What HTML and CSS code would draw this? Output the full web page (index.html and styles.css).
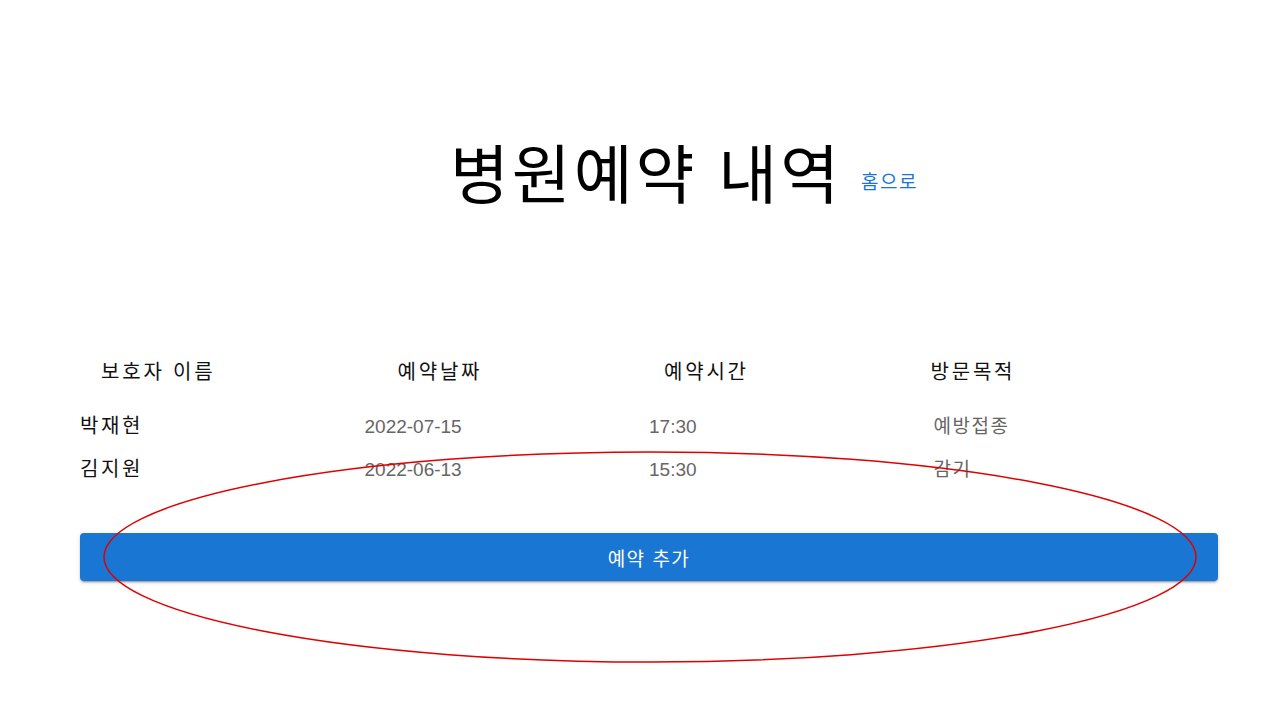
FILE: index.html
```html
<!DOCTYPE html>
<html lang="ko">
<head>
<meta charset="utf-8">
<link rel="stylesheet" href="styles.css">
</head>
<body>
<main class="page">
  <header class="title-row">
    <h1 class="title">병원예약 내역</h1>
    <a class="home-link" href="#">홈으로</a>
  </header>
  <section class="table">
    <div class="row head">
      <div class="cell h1c">보호자 이름</div>
      <div class="cell h2c">예약날짜</div>
      <div class="cell h3c">예약시간</div>
      <div class="cell h4c">방문목적</div>
    </div>
    <div class="row data">
      <div class="cell name">박재현</div>
      <div class="cell val">2022-07-15</div>
      <div class="cell val">17:30</div>
      <div class="cell val ko">예방접종</div>
    </div>
    <div class="row data">
      <div class="cell name">김지원</div>
      <div class="cell val">2022-06-13</div>
      <div class="cell val">15:30</div>
      <div class="cell val ko">감기</div>
    </div>
  </section>
  <button class="add-btn">예약 추가</button>
</main>
<svg class="annot" width="1280" height="720" viewBox="0 0 1280 720">
  <ellipse cx="650" cy="557" rx="546" ry="105" fill="none" stroke="#e00000" stroke-width="1.5"/>
</svg>
</body>
</html>
```
FILE: styles.css
```css
html, body {
  margin: 0;
  padding: 0;
  background: #fff;
}
body {
  font-family: "Liberation Sans", "Noto Sans CJK KR", sans-serif;
  color: #111;
  width: 1280px;
  height: 720px;
  overflow: hidden;
  position: relative;
}
.page {
  padding: 0 62px 0 80px;
  display: flex;
  flex-direction: column;
}
.title-row {
  display: flex;
  justify-content: center;
  align-items: flex-start;
  gap: 19px;
  margin-top: 131px;
  padding-left: 70px;
}
.title {
  margin: 0;
  font-size: 64px;
  font-weight: 400;
  line-height: 90px;
  letter-spacing: 3px;
  color: #000;
}
.home-link {
  margin-top: 40px;
  font-size: 19px;
  line-height: 24px;
  letter-spacing: 1.5px;
  color: #1976d2;
  text-decoration: none;
}
.table {
  margin-top: 136px;
  display: flex;
  flex-direction: column;
}
.row {
  display: grid;
  grid-template-columns: repeat(4, 1fr);
}
.head {
  font-size: 20px;
  letter-spacing: 2.8px;
  color: #111;
  line-height: 30px;
  margin-bottom: 18px;
}
.h1c { padding-left: 21px; }
.h2c { padding-left: 33px; }
.h3c { padding-left: 15px; }
.h4c { margin-left: -3px; }
.data {
  line-height: 43px;
  align-items: baseline;
}
.name {
  font-size: 20px;
  letter-spacing: 2.6px;
  color: #111;
}
.val {
  font-size: 19px;
  color: #666;
}
.val.ko {
  letter-spacing: 1.5px;
}
.add-btn {
  margin-top: 42px;
  height: 48px;
  border: none;
  border-radius: 4px;
  background: #1976d2;
  color: #fff;
  font-family: inherit;
  font-size: 19px;
  letter-spacing: 1.5px;
  box-shadow: 0 3px 1px -2px rgba(0,0,0,0.2), 0 2px 2px 0 rgba(0,0,0,0.14), 0 1px 5px 0 rgba(0,0,0,0.12);
}
.annot {
  position: absolute;
  left: 0;
  top: 0;
  pointer-events: none;
}
```
